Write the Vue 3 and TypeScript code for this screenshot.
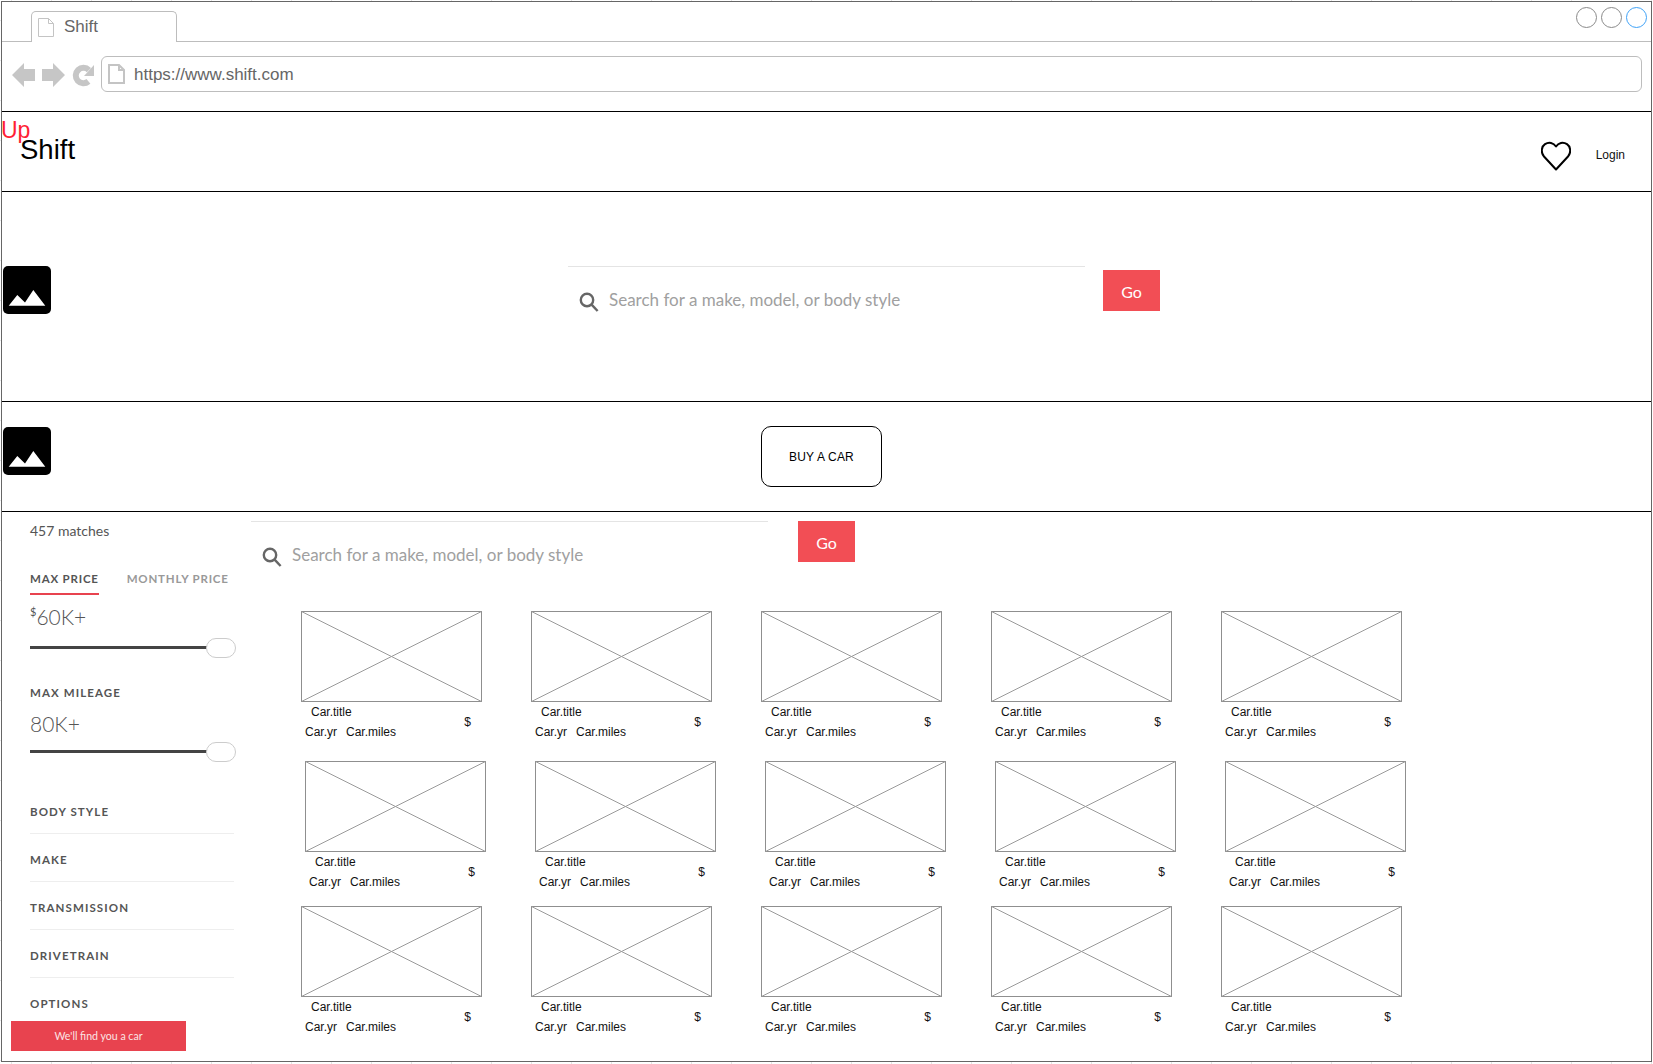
<script setup lang="ts">
interface Car {
  id: number;
}

const rows: { id: number; shift: boolean; cars: Car[] }[] = [0, 1, 2].map((r) => ({
  id: r,
  shift: r === 1,
  cars: [0, 1, 2, 3, 4].map((c) => ({ id: r * 10 + c })),
}));

const filters = ["BODY STYLE", "MAKE", "TRANSMISSION", "DRIVETRAIN", "OPTIONS"];
</script>

<template>
  <div class="page">
    <div class="frame">
      <div class="tabstrip">
        <div class="tab">
          <svg class="doc" viewBox="0 0 16 19" width="16" height="19">
            <path d="M.5.5h10l5 5v13H.5zM10.5.5v5h5" />
          </svg>
          <span>Shift</span>
        </div>
        <div class="winbtns">
          <i></i>
          <i></i>
          <i class="blue"></i>
        </div>
      </div>

      <div class="toolbar">
        <svg class="nav" viewBox="0 0 84 24" width="84" height="24">
          <path d="M0 12 12 0v6h11v12H12v6z" />
          <path d="M53 12 41 0v6H30v12h11v6z" />
          <path class="reload" d="M76.900 7.100A7.700 7.700 0 1 0 76.450 18.400" />
          <path d="M82 2v11H72z" />
        </svg>
        <div class="address">
          <svg class="doc thick" viewBox="0 0 17 20" width="17" height="20">
            <path d="M1 1h10l5 5v13H1zM11 1v5h5" />
          </svg>
          <span>https://www.shift.com</span>
        </div>
      </div>

      <header class="site-head">
        <span class="up">Up</span>
        <span class="logo">Shift</span>
        <svg class="heart" viewBox="0 0 30 30" width="30" height="30">
          <path d="M15 28.500 3 15.500C-.5 11.500.5 5.500 4 3.200 8 .5 12.500 1.800 15 5.500 17.500 1.800 22 .5 26 3.200 29.500 5.500 30.500 11.500 27 15.500z" />
        </svg>
        <span class="login">Login</span>
      </header>

      <section class="hero">
        <svg class="pic" viewBox="0 0 48 48" width="48" height="48">
          <rect width="48" height="48" rx="5" />
          <path d="M5.700 39.700 14.300 29 22 36.500 30.300 24 42.300 39.700z" />
        </svg>
        <div class="search hero-search">
          <svg viewBox="0 0 20 20" width="20" height="20">
            <circle cx="8" cy="8" r="6.200" />
            <path d="m12.600 12.600 6 6.400" />
          </svg>
          <span>Search for a make, model, or body style</span>
        </div>
        <button class="go">Go</button>
      </section>

      <section class="buy">
        <svg class="pic" viewBox="0 0 48 48" width="48" height="48">
          <rect width="48" height="48" rx="5" />
          <path d="M5.700 39.700 14.300 29 22 36.500 30.300 24 42.300 39.700z" />
        </svg>
        <button class="buy-btn">BUY A CAR</button>
      </section>

      <section class="results">
        <aside class="side">
          <div class="matches">457 matches</div>
          <div class="tabs">
            <span class="label active">MAX PRICE</span>
            <span class="label muted">MONTHLY PRICE</span>
          </div>
          <div class="amount price"><sup>$</sup>60K+</div>
          <div class="slider first"><b></b></div>
          <div class="label mileage">MAX MILEAGE</div>
          <div class="amount miles">80K+</div>
          <div class="slider second"><b></b></div>
          <ul class="filters">
            <li v-for="f in filters" :key="f" class="label">{{ f }}</li>
          </ul>
          <button class="find">We'll find you a car</button>
        </aside>

        <div class="listing">
          <div class="listing-top">
            <div class="search">
              <svg viewBox="0 0 20 20" width="20" height="20">
                <circle cx="8" cy="8" r="6.200" />
                <path d="m12.600 12.600 6 6.400" />
              </svg>
              <span>Search for a make, model, or body style</span>
            </div>
            <button class="go second-go">Go</button>
          </div>

          <div class="grid">
            <div v-for="row in rows" :key="row.id" class="row" :class="{ shift: row.shift }">
              <div v-for="car in row.cars" :key="car.id" class="card">
                <svg class="thumb" viewBox="0 0 181 91" width="181" height="91">
                  <rect x=".5" y=".5" width="180" height="90" />
                  <path d="M.5.5l180 90M180.500.500l-180 90" />
                </svg>
                <div class="meta">
                  <div>
                    <div class="title">Car.title</div>
                    <div class="sub"><span>Car.yr</span><span>Car.miles</span></div>
                  </div>
                  <span class="price-tag">$</span>
                </div>
              </div>
            </div>
          </div>
        </div>
      </section>
    </div>
  </div>
</template>

<style>
html,
body {
  margin: 0;
  background: #fff;
}
</style>

<style scoped>
.page {
  width: 1653px;
  height: 1064px;
  padding: 1px 0 0 1px;
  box-sizing: border-box;
  overflow: hidden;
  font-family: "Liberation Sans", Arial, sans-serif;
  /* ruler ticks that peek out round the frame */
  background:
    repeating-linear-gradient(90deg, #e6e6e6 0 1px, transparent 1px 40px) 11px 0 / 100% 1px repeat-x,
    repeating-linear-gradient(90deg, #e6e6e6 0 1px, transparent 1px 40px) 11px 100% / 100% 2px repeat-x,
    repeating-linear-gradient(180deg, #e6e6e6 0 1px, transparent 1px 40px) 0 20px / 1px 100% repeat-y;
}

.frame {
  width: 1651px;
  height: 1061px;
  box-sizing: border-box;
  border: 1px solid #666;
  display: flex;
  flex-direction: column;
  background: #fff;
}

.tabstrip {
  height: 40px;
  box-sizing: border-box;
  flex: none;
  display: flex;
  justify-content: space-between;
  padding-left: 29px;
  padding-top: 9px;
  border-bottom: 1px solid #bdbdbd;
}

.tab {
  width: 146px;
  height: 31px;
  box-sizing: border-box;
  border: 1px solid #bdbdbd;
  border-bottom: 0;
  border-radius: 5px 5px 0 0;
  background: #fff;
  display: flex;
  align-items: flex-start;
  padding: 6px 0 0 6px;
  color: #666;
  font-size: 17px;
  line-height: 19px;
}

.tab span {
  margin: -1px 0 0 10px;
}

.doc path {
  fill: #fff;
  stroke: #c4c4c4;
  stroke-width: 1;
}

.doc.thick path {
  stroke-width: 2;
}

.winbtns {
  display: flex;
  gap: 4px;
  margin: -4px 4px 0 0;
}

.winbtns i {
  display: block;
  width: 21px;
  height: 21px;
  box-sizing: border-box;
  border: 1px solid #8a8a8a;
  border-radius: 50%;
}

.winbtns .blue {
  border-color: #3fa2f7;
}

.toolbar {
  height: 70px;
  flex: none;
  box-sizing: border-box;
  display: flex;
  align-items: flex-start;
  padding: 14px 9px 0 10px;
  border-bottom: 1px solid #000;
}

.nav {
  margin-top: 7px;
  flex: none;
}

.nav path {
  fill: #c6c6c6;
}

.nav .reload {
  fill: none;
  stroke: #c6c6c6;
  stroke-width: 6;
}

.address {
  flex: 1;
  margin-left: 5px;
  height: 36px;
  box-sizing: border-box;
  border: 1px solid #bdbdbd;
  border-radius: 6px;
  display: flex;
  align-items: center;
  padding-left: 6px;
  color: #666;
  font-size: 17px;
}

.address span {
  margin: 2px 0 0 9px;
}

.site-head {
  position: relative;
  height: 80px;
  flex: none;
  box-sizing: border-box;
  display: flex;
  align-items: center;
  padding: 0 26px 0 18px;
  border-bottom: 1px solid #000;
}

.up {
  position: absolute;
  left: -1px;
  top: 5px;
  color: #ff1f35;
  font-size: 23px;
  line-height: 26px;
}

.logo {
  font-size: 27.500px;
  line-height: 32px;
  margin-top: -3px;
  color: #000;
}

.heart {
  margin-left: auto;
  margin-top: 8px;
}

.heart path {
  fill: none;
  stroke: #000;
  stroke-width: 2;
  stroke-linejoin: round;
}

.login {
  margin-left: 25px;
  margin-top: 6px;
  font-size: 12px;
  color: #111;
}

.hero {
  height: 210px;
  flex: none;
  box-sizing: border-box;
  display: flex;
  align-items: flex-start;
  padding: 74px 0 0 1px;
  border-bottom: 1px solid #000;
}

.pic {
  flex: none;
}

.pic path {
  fill: #fff;
}

.search {
  width: 517px;
  height: 60px;
  flex: none;
  box-sizing: border-box;
  border-top: 1px solid #e4e4e4;
  display: flex;
  align-items: flex-start;
  padding: 25px 0 0 11px;
  color: #a0a0a0;
  font-family: Lato, "Open Sans", sans-serif;
  font-size: 17px;
  line-height: 20px;
}

.search span {
  margin-top: -2px;
}

.search svg {
  flex: none;
  margin-right: 10px;
}

.search circle,
.search svg path {
  fill: none;
  stroke: #666;
  stroke-width: 2.400;
}

.hero-search {
  margin-left: 517px;
}

.go {
  width: 57px;
  height: 41px;
  flex: none;
  border: 0;
  padding: 2px 0 0;
  margin: 4px 0 0 18px;
  background: #f24e55;
  color: #fff;
  font-family: Lato, "Open Sans", sans-serif;
  font-size: 16px;
  font-weight: 400;
}

.buy {
  height: 110px;
  flex: none;
  box-sizing: border-box;
  display: flex;
  align-items: flex-start;
  padding: 24px 0 0 1px;
  border-bottom: 1px solid #000;
}

.buy .pic {
  margin-top: 1px;
}

.buy-btn {
  width: 121px;
  height: 61px;
  margin-left: 710px;
  padding: 0;
  background: #fff;
  border: 1px solid #000;
  border-radius: 10px;
  color: #000;
  font-family: "Liberation Sans", Arial, sans-serif;
  font-size: 12px;
  letter-spacing: 0.2px;
}

.results {
  flex: 1;
  min-height: 0;
  display: flex;
}

.side {
  width: 249px;
  flex: none;
  box-sizing: border-box;
  padding: 9px 17px 0 28px;
  font-family: Lato, "Open Sans", sans-serif;
  color: #555;
}

.matches {
  font-size: 14px;
  line-height: 20px;
}

.label {
  font-size: 11.500px;
  line-height: 16px;
  font-weight: 700;
  letter-spacing: 1.100px;
  color: #555;
  white-space: nowrap;
}

.tabs {
  display: flex;
  margin-top: 30px;
}

.tabs .label {
  letter-spacing: 0.800px;
}

.tabs .active {
  padding-bottom: 6px;
  border-bottom: 2px solid #e8434f;
}

.tabs .muted {
  margin-left: 28px;
  color: #999;
}

.amount {
  font-size: 21px;
  font-weight: 300;
  line-height: 26px;
  color: #555;
}

.amount sup {
  font-size: 11px;
  font-weight: 400;
  line-height: 0;
  vertical-align: 9px;
}

.price {
  margin-top: 9px;
}

.slider {
  position: relative;
  height: 20px;
  margin-top: 7px;
}

.slider.first {
  margin-top: 8px;
  margin-bottom: -1px;
}

.slider::before {
  content: "";
  position: absolute;
  left: 0;
  top: 8px;
  width: 178px;
  height: 3px;
  background: #444;
}

.slider b {
  position: absolute;
  left: 176px;
  top: 0;
  width: 30px;
  height: 20px;
  box-sizing: border-box;
  background: #fff;
  border: 1px solid #ccc;
  border-radius: 10px;
}

.mileage {
  margin-top: 28px;
}

.miles {
  margin-top: 10px;
}

.second {
  margin-top: 5px;
}

.filters {
  list-style: none;
  margin: 24px 0 0;
  padding: 0;
}

.filters li {
  padding: 18px 0 13px;
  border-bottom: 1px solid #eee;
}

.filters li:last-child {
  border-bottom: 0;
  padding-bottom: 0;
}

.find {
  display: block;
  width: 175px;
  height: 30px;
  margin: 9px 0 0 -19px;
  padding: 0;
  border: 0;
  background: #e8434f;
  color: #fbe3e4;
  font-family: Lato, "Open Sans", sans-serif;
  font-size: 10.600px;
}

.listing {
  flex: 1;
  min-width: 0;
}

.listing-top {
  display: flex;
  padding-top: 9px;
  height: 99px;
  box-sizing: border-box;
}

.second-go {
  margin: 0 0 0 30px;
}

.grid {
  padding-left: 50px;
}

.row {
  display: flex;
  gap: 49px;
  height: 145px;
}

.row:first-child {
  height: 150px;
}

.row.shift {
  padding-left: 4px;
}

.card {
  width: 181px;
  flex: none;
}

.thumb {
  display: block;
}

.thumb rect {
  fill: #fff;
  stroke: #8f8f8f;
}

.thumb path {
  fill: none;
  stroke: #9a9a9a;
}

.meta {
  display: flex;
  align-items: center;
  justify-content: space-between;
  padding: 0 11px 0 4px;
  color: #111;
  font-size: 12px;
  line-height: 20px;
}

.title {
  padding-left: 6px;
}

.sub {
  display: flex;
  gap: 9px;
}

.price-tag {
  margin-top: -1px;
}
</style>
